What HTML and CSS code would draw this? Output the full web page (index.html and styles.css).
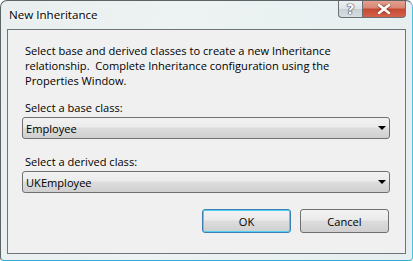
FILE: index.html
```html
<!DOCTYPE html>
<html>
<head>
<meta charset="utf-8">
<link rel="stylesheet" href="styles.css">
</head>
<body>
<div class="window">
  <div class="titlebar">
    <span class="title">New Inheritance</span>
    <div class="caption-buttons">
      <div class="cbtn help">?</div>
      <div class="cbtn close">
        <svg width="14" height="10" viewBox="0 0 14 10"><path d="M2 1 L12 9 M12 1 L2 9" stroke="#fff" stroke-width="2.6" stroke-linecap="round"/></svg>
      </div>
    </div>
  </div>
  <div class="client">
    <p class="intro">Select base and derived classes to create a new Inheritance relationship.&nbsp; Complete Inheritance configuration using the Properties Window.</p>
    <div class="field">
      <div class="label">Select a base class:</div>
      <div class="combo"><span>Employee</span><span class="arrow"></span></div>
    </div>
    <div class="field">
      <div class="label">Select a derived class:</div>
      <div class="combo"><span>UKEmployee</span><span class="arrow"></span></div>
    </div>
    <div class="buttons">
      <div class="btn default">OK</div>
      <div class="btn">Cancel</div>
    </div>
  </div>
</div>
</body>
</html>
```

FILE: styles.css
```css
html, body {
  margin: 0;
  padding: 0;
  background: #ffffff;
}
body {
  font-family: "Open Sans", "Noto Sans", sans-serif;
  font-size: 11.1px;
  color: #000;
}
.window {
  position: relative;
  width: 413px;
  height: 261px;
  box-sizing: border-box;
  border: 1px solid #5c6468;
  border-right-color: #4fc0e0;
  border-bottom-color: #35a9d4;
  border-radius: 7px 7px 4px 4px;
  background: linear-gradient(100deg, #e9eeef 0%, #edf3f3 40%, #e6eeef 100%);
  padding: 0 6px 6px 6px;
  display: flex;
  flex-direction: column;
  overflow: hidden;
}
.titlebar {
  height: 28px;
  display: flex;
  align-items: center;
}
.title {
  padding-left: 2px;
  margin-top: -2px;
  font-size: 11.6px;
  text-shadow: 0 0 6px #fff, 0 0 3px #fff;
}
.caption-buttons {
  position: absolute;
  top: -1px;
  right: 6px;
  display: flex;
}
.cbtn {
  height: 18px;
  box-sizing: border-box;
  border: 1px solid #6a6f73;
  border-top: none;
  display: flex;
  align-items: center;
  justify-content: center;
}
.help {
  width: 24px;
  border-radius: 0 0 0 4px;
  border-right: none;
  background: linear-gradient(#eef2f4 0%, #dfe4e8 50%, #c9d0d5 55%, #d8dde1 100%);
  color: #fff;
  font-family: "DejaVu Sans", sans-serif;
  font-size: 14px;
  font-weight: bold;
  text-shadow: 0 0 1px #333, 0 0 1px #333, 0 0 1px #333;
}
.close {
  width: 44px;
  border-radius: 0 0 4px 0;
  background: linear-gradient(#e6a393 0%, #d88876 45%, #c64a32 55%, #d5604a 100%);
}
.close svg path {
  filter: drop-shadow(0 0 1px #6a2010);
}
.client {
  flex: 1;
  border: 1px solid #6e7578;
  background: #f0f0f0;
  padding: 13px 16px 0 14px;
  display: flex;
  flex-direction: column;
}
.intro {
  margin: 0 0 0 3px;
  max-width: 325px;
  line-height: 15px;
}
.field {
  margin-top: 12px;
  margin-right: -1px;
}
.label {
  margin-left: 3px;
  line-height: 15px;
}
.field + .field {
  margin-top: 15px;
}
.combo {
  margin-top: 2px;
  height: 22px;
  box-sizing: border-box;
  border: 1px solid #707070;
  border-radius: 3px;
  background: linear-gradient(#f2f2f2 0%, #ebebeb 45%, #dddddd 50%, #cfcfcf 100%);
  display: flex;
  align-items: center;
  justify-content: space-between;
  padding: 0 3px 0 3px;
}
.arrow {
  width: 0;
  height: 0;
  border-left: 4px solid transparent;
  border-right: 4px solid transparent;
  border-top: 4px solid #000;
}
.buttons {
  margin-top: 16px;
  display: flex;
  justify-content: flex-end;
  gap: 9px;
}
.btn {
  width: 89px;
  height: 24px;
  box-sizing: border-box;
  border: 1px solid #707070;
  border-radius: 3px;
  background: linear-gradient(#f2f2f2 0%, #ebebeb 45%, #dddddd 50%, #cfcfcf 100%);
  display: flex;
  align-items: center;
  justify-content: center;
}
.btn.default {
  border-color: #3c7fb1;
  box-shadow: inset 0 0 0 1px #4fd0f6;
}
```
